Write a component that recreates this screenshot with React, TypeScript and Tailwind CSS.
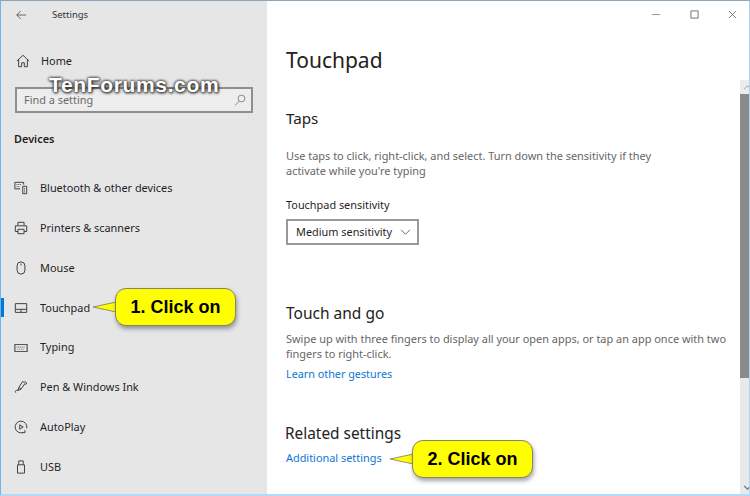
import React from "react";

const Stroke = ({ children, className = "" }: { children: React.ReactNode; className?: string }) => (
  <svg viewBox="0 0 16 16" fill="none" stroke="#3c3c3c" strokeWidth="1.1" className={`w-[14px] h-[14px] ${className}`}>
    {children}
  </svg>
);

const icons: Record<string, React.ReactNode> = {
  bluetooth: (
    <Stroke>
      <path d="M1 1.500h10v2.500M1 1.500v7.500h6M10 6h4.500V14.500H10z" />
      <path d="M3 4h5M3 6.500h3M11.500 8.500h1.500M11.500 10.500h1.500M11.500 12.500h1.500" strokeDasharray="1 1" />
    </Stroke>
  ),
  printer: (
    <Stroke>
      <path d="M4.500 5V1.500h7V5M4.500 12H1.500V5.500h13V12H11.500M4.500 9.500h7v5h-7z" />
    </Stroke>
  ),
  mouse: (
    <Stroke>
      <path d="M3.500 5.500a4.500 4.500 0 0 1 9 0v5a4.500 4.500 0 0 1-9 0zM8 3v2" />
    </Stroke>
  ),
  touchpad: (
    <Stroke>
      <path d="M1.500 3h13v10h-13zM1.500 9.500h13M8 9.500V13" />
    </Stroke>
  ),
  keyboard: (
    <svg viewBox="0 0 16 16" className="w-[14px] h-[14px]" fill="none" stroke="#555" strokeWidth="1.400">
      <path d="M1 4h14v8H1z" />
      <path d="M3 7h10M4 9.500h8" stroke="#777" strokeDasharray="1 1" strokeWidth="1.200" />
    </svg>
  ),
  pen: (
    <Stroke>
      <path d="M10 1.500l2.500 2.500-4.500 6.500-2.500-2zM12 1l2.500 2.500-1.500 2M5.500 8.500L4.500 12 8 10.500M4.500 12C2 11 1 13 2 14.500" />
    </Stroke>
  ),
  autoplay: (
    <Stroke>
      <path d="M10.500 14.200A6.700 6.700 0 1 1 14.500 9.500" />
      <path d="M6.500 5.500l4 2.500-4 2.500zM12.500 11.500v3h-3" />
    </Stroke>
  ),
  usb: (
    <Stroke>
      <path d="M4 5.500h8v9.500H4zM5.500 5.500V1h5v4.500" />
    </Stroke>
  ),
};

const items: { key: string; label: string; active?: boolean }[] = [
  { key: "bluetooth", label: "Bluetooth & other devices" },
  { key: "printer", label: "Printers & scanners" },
  { key: "mouse", label: "Mouse" },
  { key: "touchpad", label: "Touchpad", active: true },
  { key: "keyboard", label: "Typing" },
  { key: "pen", label: "Pen & Windows Ink" },
  { key: "autoplay", label: "AutoPlay" },
  { key: "usb", label: "USB" },
];

function Callout({ text, className, tailClass }: { text: string; className: string; tailClass: string }) {
  return (
    <div className={`absolute ${className}`}>
      <svg viewBox="0 0 28 14" className={`absolute ${tailClass} w-[28px] h-[14px]`}>
        <path d="M28 1L0 7l28 6z" fill="#ffff00" stroke="#7b7b5a" strokeWidth="0.8" />
      </svg>
      <div className="relative w-full h-full rounded-[11px] border border-[#85856a] bg-[#ffff00] shadow-[1px_3px_4px_rgba(0,0,0,0.35)] flex items-center justify-center text-[18px] font-bold text-black font-['Liberation_Sans',sans-serif]">
        {text}
      </div>
    </div>
  );
}

export default function App() {
  return (
    <div className="relative w-[750px] h-[496px] overflow-hidden flex bg-white border-t border-t-[#8fa5b5] border-l border-l-[#6fb4ee] border-r border-r-[#a9d4f5] border-b-2 border-b-[#b4daf7] font-['Noto_Sans',sans-serif] text-[#1f1f1f]">
      <aside className="w-[266px] shrink-0 bg-[#e6e6e6] flex flex-col">
        <div className="h-[28px] flex items-center pl-[15px]">
          <svg viewBox="0 0 14 12" fill="none" stroke="#444" strokeWidth="1" className="w-[11px] h-[10px]">
            <path d="M13 6H1M6 1L1 6l5 5" />
          </svg>
          <span className="ml-[25px] text-[9.500px] text-[#333]">Settings</span>
        </div>
        <div className="mt-[18px] h-[28px] flex items-center pl-[15px]">
          <svg viewBox="0 0 16 16" fill="none" stroke="#3c3c3c" strokeWidth="1.1" className="w-[14px] h-[14px]">
            <path d="M1 8l7-6.500L15 8M3 6.500V14.500h3.500V10h3v4.500H13V6.500" />
          </svg>
          <span className="ml-[11px] text-[10.900px]">Home</span>
        </div>
        <div className="mt-[12px] ml-[14px] w-[238px] h-[26px] border-2 border-[#8e8e8e] bg-[#ededed] flex items-center justify-between pl-[7px] pr-[5px]">
          <span className="text-[10.900px] text-[#6a6a6a]">Find a setting</span>
          <svg viewBox="0 0 16 16" fill="none" stroke="#777" strokeWidth="1.1" className="w-[12px] h-[12px]">
            <circle cx="10" cy="6" r="4.500" />
            <path d="M7 9.500L1.500 15" />
          </svg>
        </div>
        <div className="mt-[16px] ml-[13px] text-[10.900px] font-semibold leading-[20px]">Devices</div>
        <div className="mt-[19.500px] flex flex-col">
          {items.map((it) => (
            <div key={it.key} className="relative h-[39.8px] flex items-center pl-[13px]">
              {it.active && <div className="absolute left-0 top-[10px] w-[3px] h-[19px] bg-[#0078d7]" />}
              {icons[it.key]}
              <span className="ml-[12px] text-[10.900px] whitespace-nowrap">{it.label}</span>
            </div>
          ))}
        </div>
      </aside>

      <main className="flex-1 relative flex">
        <div className="flex-1 pl-[19px] pr-[8px] flex flex-col">
          <div className="mt-[40px] text-[21px] leading-[38px] text-[#222]">Touchpad</div>
          <div className="mt-[27px] text-[15.200px] leading-[24px] text-[#222]">Taps</div>
          <p className="mt-[18px] w-[390px] text-[10.950px] leading-[15px] text-[#666]">
            Use taps to click, right-click, and select. Turn down the sensitivity if they activate while you're typing
          </p>
          <div className="mt-[17px] text-[10.900px] leading-[20px]">Touchpad sensitivity</div>
          <div className="mt-[4px] w-[133px] h-[26px] border-2 border-[#999] flex items-center justify-between pl-[8px] pr-[6px] text-[10.900px]">
            <span className="whitespace-nowrap">Medium sensitivity</span>
            <svg viewBox="0 0 12 8" fill="none" stroke="#555" strokeWidth="1" className="w-[11px] h-[7px] shrink-0">
              <path d="M1 1l5 5 5-5" />
            </svg>
          </div>
          <div className="mt-[56px] text-[15.500px] leading-[24px] text-[#222]">Touch and go</div>
          <p className="mt-[6px] text-[10.950px] leading-[15px] text-[#666] w-[446px]">
            Swipe up with three fingers to display all your open apps, or tap an app once with two fingers to right-click.
          </p>
          <div className="mt-[3px] text-[10.800px] leading-[20px] text-[#0a78d2]">Learn other gestures</div>
          <div className="mt-[38px] text-[15.400px] leading-[24px] text-[#222] -ml-[1px]">Related settings</div>
          <div className="mt-[2px] text-[10.900px] leading-[20px] text-[#0a78d2]">Additional settings</div>
        </div>
        <div className="w-[14px] shrink-0 flex flex-col">
          <div className="mt-[79px] h-[14px] bg-[#ececec] flex items-center justify-center">
            <svg viewBox="0 0 10 6" fill="none" stroke="#8a8a8a" strokeWidth="1" className="w-[9px] h-[5px]">
              <path d="M1 5l4-4 4 4" />
            </svg>
          </div>
          <div className="h-[284px] bg-[#8a8a8a]" />
          <div className="flex-1 bg-[#e9e9e9] flex items-end justify-center pb-[4px]">
            <svg viewBox="0 0 10 6" fill="none" stroke="#777" strokeWidth="1.500" className="w-[9px] h-[5px]">
              <path d="M1 1l4 4 4-4" />
            </svg>
          </div>
        </div>
        <div className="absolute top-[9px] right-[17px] flex items-center">
          <svg viewBox="0 0 10 10" className="w-[9px] h-[9px] mr-[29px]" stroke="#9a9a9a" strokeWidth="1.200" fill="none">
            <path d="M0 5h9" />
          </svg>
          <svg viewBox="0 0 10 10" className="w-[9px] h-[9px] mr-[29px]" stroke="#666" strokeWidth="1" fill="none">
            <path d="M1 1h8v8H1z" />
          </svg>
          <svg viewBox="0 0 10 10" className="w-[9px] h-[9px]" stroke="#666" strokeWidth="0.900" fill="none">
            <path d="M1 1l8 8M9 1l-8 8" />
          </svg>
        </div>
      </main>

      <div className="absolute left-[48px] top-[70px] text-[21px] leading-[28px] font-bold text-white tracking-[0.65px] font-['Liberation_Sans',sans-serif] [text-shadow:0_0_3px_#333,0_0_3px_#333,1px_1px_3px_#333]">
        TenForums.com
      </div>

      <Callout
        text="1. Click on"
        className="left-[114px] top-[287px] w-[121px] h-[38px]"
        tailClass="-left-[22px] top-[12px]"
      />
      <Callout
        text="2. Click on"
        className="left-[411px] top-[439px] w-[121px] h-[38px]"
        tailClass="-left-[22px] top-[12px]"
      />
    </div>
  );
}
